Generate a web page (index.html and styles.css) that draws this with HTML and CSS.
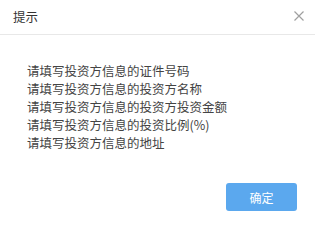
FILE: index.html
```html
<!DOCTYPE html>
<html lang="zh-CN">
<head>
<meta charset="utf-8" />
<title>提示</title>
<link rel="stylesheet" href="styles.css">
</head>
<body>
<div class="dialog">
  <div class="dialog-header">
    <span class="dialog-title">提示</span>
    <button class="dialog-close" aria-label="关闭">
      <svg width="10" height="10" viewBox="0 0 10 10"><path d="M0.5 0.5L9.5 9.5M9.5 0.5L0.5 9.5" stroke="#a0a0a0" stroke-width="1.2" fill="none"/></svg>
    </button>
  </div>
  <div class="dialog-body">
    <p>请填写投资方信息的证件号码</p>
    <p>请填写投资方信息的投资方名称</p>
    <p>请填写投资方信息的投资方投资金额</p>
    <p>请填写投资方信息的投资比例(%)</p>
    <p>请填写投资方信息的地址</p>
  </div>
  <div class="dialog-footer">
    <button class="btn-primary">确定</button>
  </div>
</div>
</body>
</html>
```

FILE: styles.css
```css
*{box-sizing:border-box;margin:0;padding:0;}
body{
  background:#fff;
  color:#333;
  font-family:"Noto Sans CJK SC","Liberation Sans",sans-serif;
  width:315px;
  height:230px;
  overflow:hidden;
}
.dialog{display:flex;flex-direction:column;height:230px;}
.dialog-header{
  height:35px;
  display:flex;
  align-items:center;
  justify-content:space-between;
  padding:0 11px 2px 13px;
  border-bottom:1px solid #e8e8e8;
}
.dialog-title{font-size:12.5px;color:#333;}
.dialog-close{
  border:none;
  background:none;
  width:10px;
  height:10px;
  display:flex;
  cursor:pointer;
}
.dialog-body{padding:27px 0 0 27px;height:148px;}
.dialog-body p{font-size:12.5px;line-height:18px;color:#444;}
.dialog-footer{display:flex;justify-content:flex-end;padding-right:18px;}
.btn-primary{
  width:71px;
  height:28px;
  border:none;
  border-radius:3px;
  background:#5ba8ee;
  color:#fff;
  font-family:inherit;
  font-size:12px;
  cursor:pointer;
}
```
